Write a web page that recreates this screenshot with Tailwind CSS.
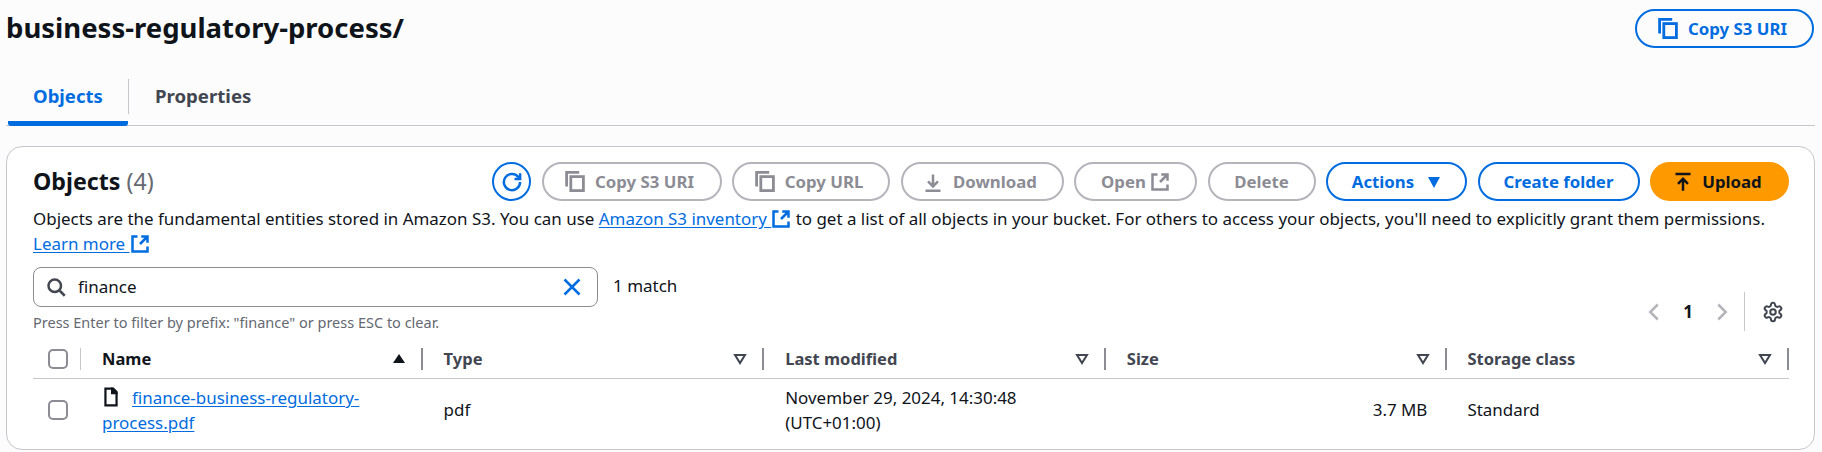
<!DOCTYPE html>
<html><head><meta charset="utf-8"><script src="https://cdn.jsdelivr.net/npm/@tailwindcss/browser@4"></script></head>
<body class="bg-[#fcfcfd] font-['Noto_Sans',sans-serif] text-[#0f141a] overflow-hidden">
<div class="w-[1822px] h-[452px] pl-[6px] pr-[7px]">
  <div class="flex justify-between pt-[9px] h-[79px]">
    <h1 class="text-[27.5px] leading-[38px] font-bold">business-regulatory-process/</h1>
    <button class="w-[179px] h-[39px] mr-px pr-[4px] rounded-full border-2 border-[#006ce0] text-[#006ce0] font-bold text-[16.8px] flex items-center justify-center gap-[10px]">
      <svg class="w-[20px] h-[21px]" viewBox="1 1 14 15" fill="none" stroke="currentColor" stroke-width="2"><path d="M2 12V2h9"/><rect x="5" y="5" width="9" height="10"/></svg>Copy S3 URI</button>
  </div>
  <div class="flex h-[47px] border-b border-[#c6c6cd] relative">
    <div class="w-[120px] h-[47px] flex items-center pl-[25px] pb-[8px] text-[#006ce0] font-bold text-[18.5px] border-b-[5px] border-[#006ce0] rounded-b-[3px] ml-[2px] -mb-[1px]">Objects</div>
    <div class="w-px h-[35px] bg-[#c6c6cd]"></div>
    <div class="flex items-center pl-[26px] pb-[12px] text-[#424650] font-bold text-[18.6px]">Properties</div>
  </div>
  <div class="mt-[20px] h-[304px] rounded-[16px] border border-[#c6c6cd] bg-white pl-[26px] pr-[25px]">
    <div class="flex justify-between items-center pt-[15px]">
      <div class="text-[23.2px] leading-[39px] font-bold">Objects <span class="font-normal text-[#656871]">(4)</span></div>
      <div class="flex items-center gap-[10.5px] h-[39px]">
        <button class="w-[39px] h-[39px] rounded-full border-2 border-[#006ce0] text-[#006ce0] flex items-center justify-center"><svg class="w-[20px] h-[20px]" viewBox="0 0 16 16" fill="none" stroke="currentColor" stroke-width="2"><path d="M10 5.5h4.5V1"/><path d="M14.5 8A6.5 6.5 0 1 1 13 3.9l1.3 1.4"/></svg></button>
        <button class="w-[180px] h-[39px] pr-[4px] rounded-full border-2 border-[#b4b4bb] text-[#8c8c94] font-bold text-[16.8px] flex items-center justify-center gap-[10px]"><svg class="w-[20px] h-[21px]" viewBox="1 1 14 15" fill="none" stroke="currentColor" stroke-width="2"><path d="M2 12V2h9"/><rect x="5" y="5" width="9" height="10"/></svg>Copy S3 URI</button>
        <button class="w-[158px] h-[39px] pr-[4px] rounded-full border-2 border-[#b4b4bb] text-[#8c8c94] font-bold text-[16.8px] flex items-center justify-center gap-[10px]"><svg class="w-[20px] h-[21px]" viewBox="1 1 14 15" fill="none" stroke="currentColor" stroke-width="2"><path d="M2 12V2h9"/><rect x="5" y="5" width="9" height="10"/></svg>Copy URL</button>
        <button class="w-[163px] h-[39px] pr-[4px] rounded-full border-2 border-[#b4b4bb] text-[#8c8c94] font-bold text-[16.8px] flex items-center justify-center gap-[10px]"><svg class="w-[20px] h-[20px]" viewBox="0 0 16 16" fill="none" stroke="currentColor" stroke-width="2"><path d="M8 2v9M4 7.5 8 11.5l4-4M2 15h12"/></svg>Download</button>
        <button class="w-[123px] h-[39px] rounded-full border-2 border-[#b4b4bb] text-[#8c8c94] font-bold text-[16.8px] flex items-center justify-center gap-[4px]">Open<svg class="w-[20px] h-[20px]" viewBox="0 0 16 16" fill="none" stroke="currentColor" stroke-width="2"><path d="M6 2H2v12h12v-4M9 2h5v5M14 2 8 8"/></svg></button>
        <button class="w-[108px] h-[39px] rounded-full border-2 border-[#b4b4bb] text-[#8c8c94] font-bold text-[16.8px] flex items-center justify-center">Delete</button>
        <button class="w-[141px] h-[39px] rounded-full border-2 border-[#006ce0] text-[#006ce0] font-bold text-[16.8px] flex items-center justify-center gap-[13px]">Actions<svg class="w-[14px] h-[14px]" viewBox="0 0 14 14" fill="currentColor"><path d="M1 2h12L7 13z"/></svg></button>
        <button class="w-[162px] h-[39px] rounded-full border-2 border-[#006ce0] text-[#006ce0] font-bold text-[16.8px] flex items-center justify-center">Create folder</button>
        <button class="w-[139px] h-[39px] pr-[4px] rounded-full bg-[#ff9900] text-[#0f141a] font-bold text-[16.8px] flex items-center justify-center gap-[9px]"><svg class="w-[20px] h-[20px]" viewBox="0 0 16 16" fill="none" stroke="currentColor" stroke-width="2"><path d="M8 15V5.5M4 9.5l4-4 4 4M2 1.5h12"/></svg>Upload</button>
      </div>
    </div>
    <p class="text-[16.94px] leading-[25px] mt-[5px] text-[#0f141a] w-[1750px]">Objects are the fundamental entities stored in Amazon S3. You can use <a class="text-[#006ce0] underline underline-offset-2">Amazon S3 inventory <svg class="inline w-[20px] h-[20px] align-[-4px]" viewBox="0 0 16 16" fill="none" stroke="currentColor" stroke-width="2"><path d="M6 2H2v12h12v-4M9 2h5v5M14 2 8 8"/></svg></a> to get a list of all objects in your bucket. For others to access your objects, you'll need to explicitly grant them permissions. <br><a class="text-[#006ce0] underline underline-offset-2">Learn more <svg class="inline w-[20px] h-[20px] align-[-4px]" viewBox="0 0 16 16" fill="none" stroke="currentColor" stroke-width="2"><path d="M6 2H2v12h12v-4M9 2h5v5M14 2 8 8"/></svg></a></p>
    <div class="flex justify-between mt-[11px] h-[69px]">
      <div>
        <div class="flex items-center gap-[15px]">
          <div class="w-[565px] h-[40px] rounded-[8px] border border-[#8c8c94] flex items-center pl-[12px] pr-[15px] gap-[12px]">
            <svg class="w-[20px] h-[20px] text-[#424650]" viewBox="0 0 16 16" fill="none" stroke="currentColor" stroke-width="2"><circle cx="7" cy="7" r="5"/><path d="m11 11 4 4"/></svg>
            <span class="text-[17px] flex-1">finance</span>
            <svg class="w-[20px] h-[20px] text-[#006ce0]" viewBox="0 0 16 16" fill="none" stroke="currentColor" stroke-width="2"><path d="m2 2 12 12M14 2 2 14"/></svg>
          </div>
          <span class="text-[17px] pb-[2px]">1 match</span>
        </div>
        <div class="text-[14.5px] leading-[20px] mt-[5px] text-[#656871]">Press Enter to filter by prefix: "finance" or press ESC to clear.</div>
      </div>
      <div class="flex items-center h-[39px] mt-[25px] pr-[5px] text-[#b4b4bb]">
        <svg class="w-[20px] h-[20px]" viewBox="0 0 16 16" fill="none" stroke="currentColor" stroke-width="2"><path d="M11 2 5 8l6 6"/></svg>
        <span class="text-[17px] font-bold text-[#0f141a] w-[48px] text-center">1</span>
        <svg class="w-[20px] h-[20px]" viewBox="0 0 16 16" fill="none" stroke="currentColor" stroke-width="2"><path d="m5 2 6 6-6 6"/></svg>
        <span class="w-px h-[39px] bg-[#c6c6cd] ml-[12px] mr-[17px]"></span>
        <svg class="w-[22px] h-[22px] text-[#424650]" viewBox="0 0 24 24" fill="none" stroke="currentColor" stroke-width="2.2"><path d="M12.22 2h-.44a2 2 0 0 0-2 2v.18a2 2 0 0 1-1 1.73l-.43.25a2 2 0 0 1-2 0l-.15-.08a2 2 0 0 0-2.73.73l-.22.38a2 2 0 0 0 .73 2.73l.15.1a2 2 0 0 1 1 1.72v.51a2 2 0 0 1-1 1.74l-.15.09a2 2 0 0 0-.73 2.73l.22.38a2 2 0 0 0 2.73.73l.15-.08a2 2 0 0 1 2 0l.43.25a2 2 0 0 1 1 1.73V20a2 2 0 0 0 2 2h.44a2 2 0 0 0 2-2v-.18a2 2 0 0 1 1-1.73l.43-.25a2 2 0 0 1 2 0l.15.08a2 2 0 0 0 2.73-.73l.22-.39a2 2 0 0 0-.73-2.73l-.15-.08a2 2 0 0 1-1-1.74v-.5a2 2 0 0 1 1-1.74l.15-.09a2 2 0 0 0 .73-2.73l-.22-.38a2 2 0 0 0-2.73-.73l-.15.08a2 2 0 0 1-2 0l-.43-.25a2 2 0 0 1-1-1.73V4a2 2 0 0 0-2-2z"/><circle cx="12" cy="12" r="3"/></svg>
      </div>
    </div>
    <div class="grid grid-cols-[48px_repeat(5,1fr)] w-[1756px] h-[31px] mt-[12px] border-b border-[#c6c6cd] items-start text-[16.5px] font-bold text-[#424650]">
      <div class="flex items-center justify-between h-[22px] pl-[15px]"><span class="w-[20px] h-[20px] rounded-[5px] border-2 border-[#8c8c94] bg-white"></span><span class="w-px h-[22px] bg-[#c6c6cd]"></span></div>
      <div class="flex items-center h-[22px] pl-[21px]"><span class="flex-1 text-[#0f141a]">Name</span><svg class="w-[14px] h-[12px] mr-[15px] text-[#0f141a]" viewBox="0 0 14 12" fill="currentColor"><path d="M7 1l6 9H1z"/></svg><span class="w-[2px] h-[22px] bg-[#8c8c94]"></span></div>
      <div class="flex items-center h-[22px] pl-[21px]"><span class="flex-1">Type</span><svg class="w-[14px] h-[12px] mr-[15px]" viewBox="0 0 14 12" fill="none" stroke="currentColor" stroke-width="2"><path d="M2 2h10L7 10z"/></svg><span class="w-[2px] h-[22px] bg-[#8c8c94]"></span></div>
      <div class="flex items-center h-[22px] pl-[21px]"><span class="flex-1">Last modified</span><svg class="w-[14px] h-[12px] mr-[15px]" viewBox="0 0 14 12" fill="none" stroke="currentColor" stroke-width="2"><path d="M2 2h10L7 10z"/></svg><span class="w-[2px] h-[22px] bg-[#8c8c94]"></span></div>
      <div class="flex items-center h-[22px] pl-[21px]"><span class="flex-1">Size</span><svg class="w-[14px] h-[12px] mr-[15px]" viewBox="0 0 14 12" fill="none" stroke="currentColor" stroke-width="2"><path d="M2 2h10L7 10z"/></svg><span class="w-[2px] h-[22px] bg-[#8c8c94]"></span></div>
      <div class="flex items-center h-[22px] pl-[20px]"><span class="flex-1">Storage class</span><svg class="w-[14px] h-[12px] mr-[15px]" viewBox="0 0 14 12" fill="none" stroke="currentColor" stroke-width="2"><path d="M2 2h10L7 10z"/></svg><span class="w-[2px] h-[22px] bg-[#8c8c94]"></span></div>
    </div>
    <div class="grid grid-cols-[48px_repeat(5,1fr)] w-[1756px] h-[70px] pb-[9px] items-center text-[16.94px] leading-[25px]">
      <div class="pl-[15px] flex"><span class="w-[20px] h-[20px] rounded-[5px] border-2 border-[#8c8c94] bg-white"></span></div>
      <div class="pl-[21px] pr-[20px]"><svg class="inline w-[18px] h-[20px] align-[-3px] mr-[12px] text-[#0f141a]" viewBox="0 0 16 18" fill="none" stroke="currentColor" stroke-width="2"><path d="M3 1.5h6l4 4v11H3z"/><path d="M9 1.5h1l3 3v1H9z" fill="currentColor"/></svg><a class="text-[#006ce0] underline underline-offset-2">finance-business-regulatory-process.pdf</a></div>
      <div class="pl-[21px]">pdf</div>
      <div class="pl-[21px] pr-[40px]">November 29, 2024, 14:30:48 (UTC+01:00)</div>
      <div class="pr-[20px] text-right">3.7 MB</div>
      <div class="pl-[20px]">Standard</div>
    </div>
  </div>
</div>
</body></html>
